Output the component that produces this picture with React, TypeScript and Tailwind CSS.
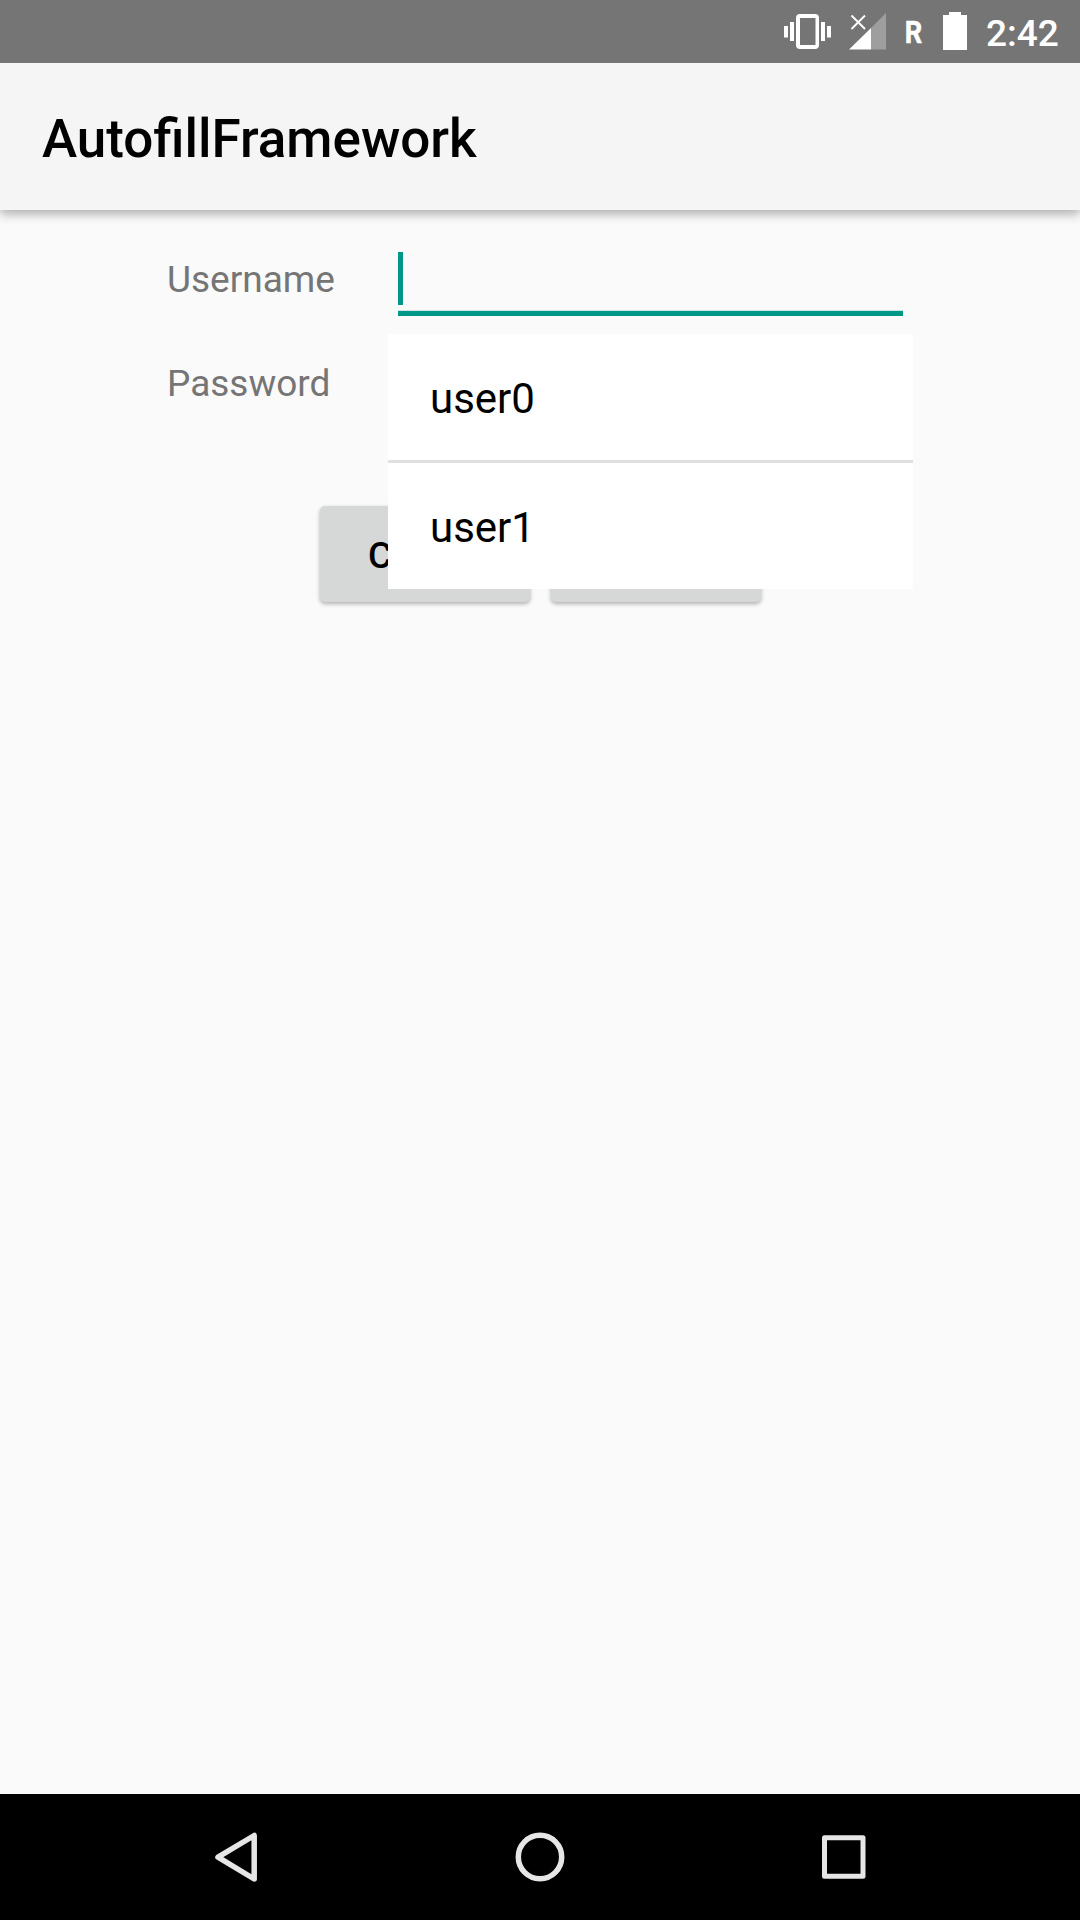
import React from "react";

function StatusBar() {
  return (
    <header className="relative z-20 flex h-[63px] shrink-0 items-start bg-[#757575] text-white">
      <svg className="ml-auto h-[63px] w-[216px]" viewBox="0 0 216 63" aria-hidden="true">
        <g fill="#fff">
          <path fillRule="evenodd" d="M30 14h15q4 0 4 4v27q0 4-4 4H30q-4 0-4-4V18q0-4 4-4zM30 18v27h15.500V18z" />
          <path d="M14 26h4v11.500h-4zM20 22h4v19h-4zM51 22h4v19h-4zM57 26h4v11.500h-4z" />
          <path d="M79 49.500 101 28v21.500z" />
          <path d="M101 28 116 13v36.500h-15z" fillOpacity=".3" />
          <path d="M81.500 15.500 95 29M95 15.500 81.500 29" fill="none" stroke="#fff" strokeWidth="1.900" />
          <path d="M179 12h12v3h6v35h-24V15h6z" />
        </g>
        <text x="134.700" y="43" fill="#fff" stroke="#fff" strokeWidth=".5" fontFamily="Roboto" fontWeight="700" fontSize="32" textLength="17.500" lengthAdjust="spacingAndGlyphs">R</text>
      </svg>
      <time className="w-[94px] pt-[12px] text-[37px] leading-[44px] font-medium">2:42</time>
    </header>
  );
}

function Field({ label, children }: { label: string; children?: React.ReactNode }) {
  return (
    <div className="flex h-[104px] pl-[167px]">
      <label className="w-[231px] text-[37px] leading-[103px] text-[#757575]">{label}</label>
      {children}
    </div>
  );
}

function Button({ children }: { children: React.ReactNode }) {
  return (
    <button className="h-[96px] w-[210px] rounded-[5px] bg-[#d6d7d7] pt-[4px] pr-[1px] text-[37px] font-medium text-black shadow-[0_2px_4px_rgba(0,0,0,0.3)]">
      {children}
    </button>
  );
}

function Suggestions() {
  return (
    <ul className="absolute top-[124px] left-[388px] w-[525px] bg-white text-[42px] text-black">
      <li className="h-[129px] border-b-[3px] border-[#e0e0e0] pl-[42px] leading-[129px]">user0</li>
      <li className="h-[126px] pl-[42px] leading-[129px]">user1</li>
    </ul>
  );
}

export default function App() {
  return (
    <div className="flex h-[1920px] w-[1080px] flex-col overflow-hidden bg-[#fafafa] font-['Roboto',sans-serif]">
      <StatusBar />
      <div className="z-10 flex h-[147px] shrink-0 items-center bg-[#f5f5f5] pt-[5px] pl-[42px] shadow-[0_4px_10px_rgba(0,0,0,0.31)]">
        <h1 className="text-[53px] leading-[62px] font-medium text-black">AutofillFramework</h1>
      </div>
      <main className="relative grow pt-[18px]">
        <Field label="Username">
          <div className="mt-[24px] h-[64px] w-[505px] border-b-[5px] border-[#009688] shadow-[inset_0_-1px_0_#cbe6e3]">
            <div className="h-[53px] w-[5px] bg-[#009688]" />
          </div>
        </Field>
        <Field label="Password" />
        <div className="flex gap-[21px] pt-[70px] pl-[320px]">
          <Button>CLEAR</Button>
          <Button>LOGIN</Button>
        </div>
        <Suggestions />
      </main>
      <nav className="h-[126px] shrink-0 bg-black">
        <svg className="h-full w-full" viewBox="0 0 1080 126" fill="none" stroke="#e6e6e6" strokeWidth="5.500" strokeLinejoin="round" aria-hidden="true">
          <path d="M218 63.200 254.200 41.500v43.500z" />
          <circle cx="540" cy="63" r="21.700" strokeWidth="5.500" />
          <rect x="824.500" y="43.800" width="38.500" height="38.500" strokeWidth="5" />
        </svg>
      </nav>
    </div>
  );
}
